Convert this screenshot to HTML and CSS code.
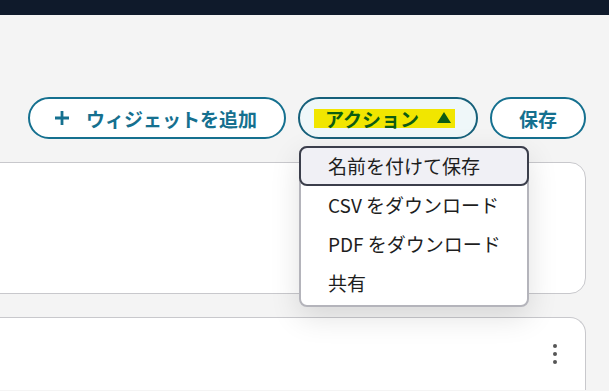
FILE: index.html
```html
<!DOCTYPE html>
<html lang="ja">
<head>
    <meta charset="UTF-8">
    <meta name="viewport" content="width=device-width, initial-scale=1.0">
    <title>ダッシュボード</title>
    <link rel="stylesheet" href="styles.css">
</head>
<body>
    <div class="topbar"></div>

    <div class="page">
        <div class="toolbar">
            <button class="btn btn-add">
                <svg class="plus" width="14" height="14" viewBox="0 0 14 14">
                    <path d="M7 0v14M0 7h14" stroke="currentColor" stroke-width="2.8" fill="none"/>
                </svg>
                ウィジェットを追加
            </button>

            <div class="menu-wrap">
                <button class="btn btn-action">
                    <span class="mark">アクション
                        <svg class="caret" width="14" height="11" viewBox="0 0 14 11">
                            <path d="M7 0L14 11H0z" fill="currentColor"/>
                        </svg>
                    </span>
                </button>
                <ul class="menu">
                    <li class="menu-item active">名前を付けて保存</li>
                    <li class="menu-item">CSV をダウンロード</li>
                    <li class="menu-item">PDF をダウンロード</li>
                    <li class="menu-item">共有</li>
                </ul>
            </div>

            <button class="btn btn-save">保存</button>
        </div>

        <div class="card card-top"></div>

        <div class="card card-bottom">
            <span class="kebab"><i></i><i></i><i></i></span>
        </div>
    </div>
</body>
</html>
```

FILE: styles.css
```css
body {
    margin: 0;
    background-color: #f4f4f4;
    font-family: "Noto Sans CJK JP", "Noto Sans", sans-serif;
    color: #1e1e1e;
    overflow: hidden;
}

.topbar {
    height: 15px;
    background-color: #0f1a2b;
}

.page {
    padding: 82px 23px 0 0;
}

.toolbar {
    display: flex;
    justify-content: flex-end;
    gap: 12px;
}

.btn {
    height: 42px;
    padding: 0 24px;
    display: flex;
    align-items: center;
    border: 2px solid #15708f;
    border-radius: 21px;
    background-color: #fff;
    color: #15708f;
    font-family: inherit;
    font-size: 19px;
    font-weight: bold;
    line-height: 1;
}

.btn-add {
    width: 258px;
    padding: 0 0 0 25px;
    gap: 17px;
}

.btn-action {
    width: 180px;
    padding: 0 0 0 14px;
    background-color: #eff7f9;
    border-color: #16607a;
}

.mark {
    display: flex;
    align-items: center;
    gap: 18px;
    height: 19px;
    background-color: #f1e600;
    color: #0d5c12;
    padding: 0 4px 0 11px;
}

.caret {
    margin-top: -1px;
}

.btn-save {
    width: 96px;
    justify-content: center;
    padding: 0;
}

.menu-wrap {
    position: relative;
}

.menu {
    position: absolute;
    top: 49px;
    left: 1px;
    width: 226px;
    margin: 0;
    padding: 0 0 2px;
    list-style: none;
    background-color: #fff;
    border: 2px solid #b4b4bb;
    border-radius: 8px;
    box-shadow: 0 10px 30px rgba(0, 0, 0, 0.12);
    z-index: 5;
}

.menu-item {
    height: 37px;
    padding: 0 0 2px 27px;
    display: flex;
    align-items: center;
    font-size: 19px;
    color: #1e1e1e;
}

.menu-item.active {
    margin: -2px -2px 0;
    height: 34px;
    padding: 0 0 2px 27px;
    border: 2px solid #3b3e4b;
    border-radius: 8px;
    background-color: #f0f0f5;
}

.card {
    margin-left: -24px;
    background-color: #fff;
    border: 1px solid #c8c8cc;
    border-radius: 0 16px 16px 0;
}

.card-top {
    margin-top: 23px;
    height: 130px;
}

.card-bottom {
    margin-top: 23px;
    height: 72px;
    border-radius: 0 16px 0 0;
    border-bottom: 0;
    position: relative;
}

.kebab {
    position: absolute;
    top: 26px;
    right: 28px;
    display: flex;
    flex-direction: column;
    gap: 4px;
}

.kebab i {
    width: 4px;
    height: 4px;
    border-radius: 50%;
    background-color: #555;
}
```
